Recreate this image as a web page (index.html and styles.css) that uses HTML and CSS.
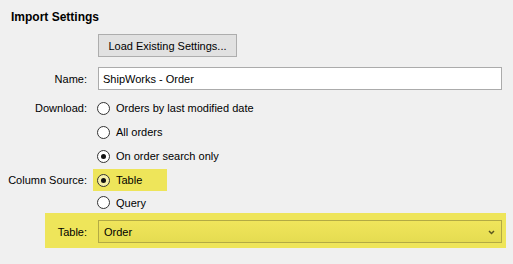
FILE: index.html
```html
<!DOCTYPE html>
<html lang="en">
<head>
  <meta charset="UTF-8">
  <title>Import Settings</title>
  <link rel="stylesheet" href="styles.css">
</head>
<body>

  <div class="panel">
    <h3 class="title">Import Settings</h3>

    <div class="row button-row">
      <span class="label"></span>
      <button class="btn">Load Existing Settings...</button>
    </div>

    <div class="row input-row">
      <span class="label">Name:</span>
      <input class="text-input" type="text" value="ShipWorks - Order">
    </div>

    <div class="row radio-row">
      <span class="label">Download:</span>
      <label class="radio"><span class="dot"></span>Orders by last modified date</label>
    </div>
    <div class="row radio-row">
      <span class="label"></span>
      <label class="radio"><span class="dot"></span>All orders</label>
    </div>
    <div class="row radio-row">
      <span class="label"></span>
      <label class="radio checked"><span class="dot"></span>On order search only</label>
    </div>

    <div class="row radio-row">
      <span class="label">Column Source:</span>
      <label class="radio checked marked"><span class="dot"></span>Table</label>
    </div>
    <div class="row radio-row short">
      <span class="label"></span>
      <label class="radio"><span class="dot"></span>Query</label>
    </div>

    <div class="row select-row marked">
      <span class="label">Table:</span>
      <div class="select">
        <span>Order</span>
        <svg class="chevron" width="7" height="5" viewBox="0 0 7 5">
          <path d="M1 1 L3.5 3.5 L6 1" fill="none" stroke="#5b5620" stroke-width="1.5"/>
        </svg>
      </div>
    </div>
  </div>

</body>
</html>
```

FILE: styles.css
```css
body {
  margin: 0;
  background-color: #f0f0f0;
  font-family: "Liberation Sans", Arial, sans-serif;
  font-size: 11px;
  color: #000;
}

.panel {
  padding: 9px 11px 0 11px;
}

.title {
  margin: 0;
  font-size: 12px;
  font-weight: bold;
  line-height: 16px;
}

.row {
  display: flex;
  align-items: center;
  gap: 10px;
}

.label {
  width: 76px;
  flex: none;
  display: flex;
  justify-content: flex-end;
  white-space: nowrap;
}

.button-row {
  margin-top: 9px;
}

.btn {
  margin-left: 1px;
  width: 139px;
  height: 23px;
  font: inherit;
  font-size: 11px;
  background: #e1e1e1;
  border: 1px solid #adadad;
  color: #000;
  padding: 0;
}

.input-row {
  margin-top: 10px;
}

.text-input {
  flex: 1;
  margin-left: 1px;
  height: 23px;
  box-sizing: border-box;
  border: 1px solid #ababab;
  background: #fff;
  font: inherit;
  padding: 0 4px;
}

.radio-row {
  height: 24px;
}

.input-row + .radio-row {
  margin-top: 6px;
}

.radio-row.short {
  height: 21px;
}

.radio {
  display: flex;
  align-items: center;
  gap: 6px;
  height: 22px;
}

.dot {
  width: 13px;
  height: 13px;
  box-sizing: border-box;
  border: 1px solid #333;
  border-radius: 50%;
  background: #fff;
  display: flex;
  align-items: center;
  justify-content: center;
}

.checked .dot::after {
  content: "";
  width: 5px;
  height: 5px;
  border-radius: 50%;
  background: #111;
}

.radio.marked {
  background: #eee55a;
  margin-left: -4px;
  padding-left: 4px;
  width: 70px;
}

.radio.marked .dot {
  background: #f6f0a8;
}

.select-row.marked {
  background: #eee55a;
  margin: 0 -4px 0 34px;
  padding: 7px 4px 5px 0;
}

.select-row .label {
  width: 42px;
}

.select {
  flex: 1;
  margin-left: 1px;
  height: 23px;
  box-sizing: border-box;
  border: 1px solid #b3aa44;
  background: linear-gradient(#f0e55b, #e5dc51);
  display: flex;
  align-items: center;
  justify-content: space-between;
  padding: 0 6px 0 5px;
}

.chevron {
  display: block;
  margin-top: 1px;
}
```
